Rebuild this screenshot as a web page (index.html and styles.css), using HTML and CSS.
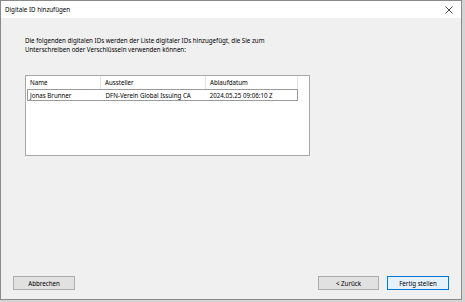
FILE: index.html
```html
<!DOCTYPE html>
<html lang="de">
<head>
    <meta charset="UTF-8">
    <title>Digitale ID hinzufügen</title>
    <link rel="stylesheet" href="styles.css">
</head>
<body>

    <div class="dialog">
        <div class="titlebar">
            <span class="title">Digitale ID hinzufügen</span>
            <svg class="close" width="8" height="8" viewBox="0 0 8 8">
                <path d="M0.5 0.5 L7.5 7.5 M7.5 0.5 L0.5 7.5" stroke="#333" stroke-width="0.9" fill="none"/>
            </svg>
        </div>

        <div class="content">
            <p class="message">
                Die folgenden digitalen IDs werden der Liste digitaler IDs hinzugefügt, die Sie zum<br>
                Unterschreiben oder Verschlüsseln verwenden können:
            </p>

            <div class="list">
                <div class="list-head">
                    <div class="col col-name">Name</div>
                    <div class="col col-issuer">Aussteller</div>
                    <div class="col col-date">Ablaufdatum</div>
                </div>
                <div class="list-row selected">
                    <div class="col col-name">Jonas Brunner</div>
                    <div class="col col-issuer">DFN-Verein Global Issuing CA</div>
                    <div class="col col-date">2024.05.25 09:06:10 Z</div>
                </div>
            </div>

            <div class="buttons">
                <button class="btn">Abbrechen</button>
                <div class="buttons-right">
                    <button class="btn">&lt; Zurück</button>
                    <button class="btn default">Fertig stellen</button>
                </div>
            </div>
        </div>
    </div>

</body>
</html>
```

FILE: styles.css
```css
body {
    margin: 0;
    background: #d4d4d4;
    font-family: "Noto Sans", "Open Sans", sans-serif;
    font-size: 6.2px;
    color: #000;
}

.dialog {
    width: 460px;
    height: 298px;
    border: 1px solid #8a8a8a;
    background: #f0f0f0;
    display: flex;
    flex-direction: column;
}

.titlebar {
    height: 17px;
    background: #fff;
    display: flex;
    align-items: center;
    justify-content: space-between;
    padding: 0 5px 0 4px;
}

.title {
    font-size: 6.2px;
}

.close {
    margin-right: 3px;
}

.content {
    flex: 1;
    display: flex;
    flex-direction: column;
    padding: 19px 12px 9px 24px;
}

.message {
    margin: 0;
    line-height: 8.5px;
}

.list {
    margin-top: 21px;
    width: 283px;
    height: 79px;
    background: #fff;
    border: 1px solid #a8a8a8;
}

.list-head, .list-row {
    display: flex;
    height: 12px;
    align-items: center;
}

.list-head {
    height: 13px;
}

.list-head .col {
    border-right: 1px solid #e5e5e5;
    height: 13px;
    line-height: 13px;
}

.col {
    padding-left: 4px;
    box-sizing: border-box;
    white-space: nowrap;
}

.col-name {
    width: 75px;
}

.col-issuer {
    width: 105px;
}

.col-date {
    width: 92px;
}

.list-row {
    margin-left: 1px;
    width: 271px;
    box-sizing: border-box;
    border: 1px solid #9a9a9a;
}

.list-row .col-name {
    width: 74px;
    padding-left: 2px;
}

.buttons {
    margin-top: auto;
    display: flex;
    justify-content: space-between;
    margin-left: -12px;
}

.buttons-right {
    display: flex;
    gap: 8px;
}

.btn {
    width: 62px;
    height: 14px;
    padding: 0;
    font-family: inherit;
    font-size: 6.2px;
    background: #e1e1e1;
    border: 1px solid #adadad;
    color: #000;
}

.buttons-right .btn:first-child {
    width: 61px;
}

.btn.default {
    background: #e5f1fb;
    border-color: #0078d7;
}
```
